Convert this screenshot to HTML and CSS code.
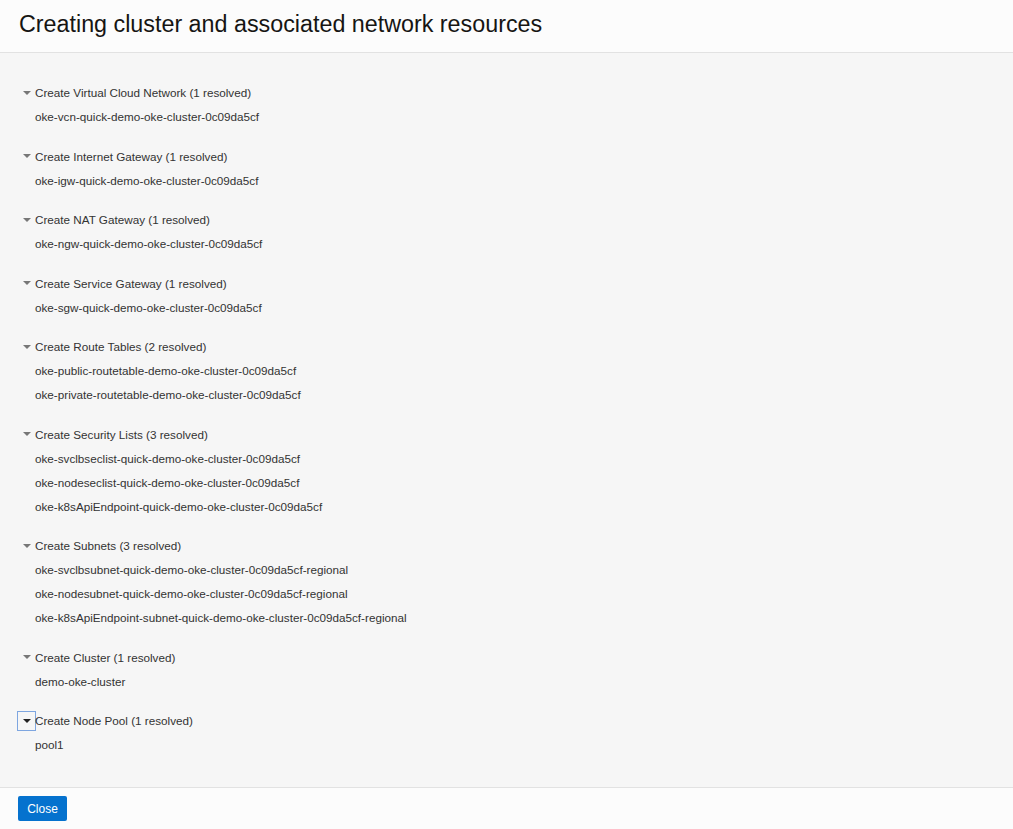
FILE: index.html
```html
<!DOCTYPE html>
<html>
<head>
<meta charset="utf-8">
<link rel="stylesheet" href="styles.css">
</head>
<body>
<div class="dialog">
  <header class="dlg-header">
    <h1 class="dlg-title">Creating cluster and associated network resources</h1>
  </header>
  <main class="dlg-body">
    <section class="group">
      <div class="group-head"><span class="toggle"><span class="tri"></span></span><span class="label">Create Virtual Cloud Network (1 resolved)</span></div>
      <div class="item">oke-vcn-quick-demo-oke-cluster-0c09da5cf</div>
    </section>
    <section class="group">
      <div class="group-head"><span class="toggle"><span class="tri"></span></span><span class="label">Create Internet Gateway (1 resolved)</span></div>
      <div class="item">oke-igw-quick-demo-oke-cluster-0c09da5cf</div>
    </section>
    <section class="group">
      <div class="group-head"><span class="toggle"><span class="tri"></span></span><span class="label">Create NAT Gateway (1 resolved)</span></div>
      <div class="item">oke-ngw-quick-demo-oke-cluster-0c09da5cf</div>
    </section>
    <section class="group">
      <div class="group-head"><span class="toggle"><span class="tri"></span></span><span class="label">Create Service Gateway (1 resolved)</span></div>
      <div class="item">oke-sgw-quick-demo-oke-cluster-0c09da5cf</div>
    </section>
    <section class="group">
      <div class="group-head"><span class="toggle"><span class="tri"></span></span><span class="label">Create Route Tables (2 resolved)</span></div>
      <div class="item">oke-public-routetable-demo-oke-cluster-0c09da5cf</div>
      <div class="item">oke-private-routetable-demo-oke-cluster-0c09da5cf</div>
    </section>
    <section class="group">
      <div class="group-head"><span class="toggle"><span class="tri"></span></span><span class="label">Create Security Lists (3 resolved)</span></div>
      <div class="item">oke-svclbseclist-quick-demo-oke-cluster-0c09da5cf</div>
      <div class="item">oke-nodeseclist-quick-demo-oke-cluster-0c09da5cf</div>
      <div class="item">oke-k8sApiEndpoint-quick-demo-oke-cluster-0c09da5cf</div>
    </section>
    <section class="group">
      <div class="group-head"><span class="toggle"><span class="tri"></span></span><span class="label">Create Subnets (3 resolved)</span></div>
      <div class="item">oke-svclbsubnet-quick-demo-oke-cluster-0c09da5cf-regional</div>
      <div class="item">oke-nodesubnet-quick-demo-oke-cluster-0c09da5cf-regional</div>
      <div class="item">oke-k8sApiEndpoint-subnet-quick-demo-oke-cluster-0c09da5cf-regional</div>
    </section>
    <section class="group">
      <div class="group-head"><span class="toggle"><span class="tri"></span></span><span class="label">Create Cluster (1 resolved)</span></div>
      <div class="item">demo-oke-cluster</div>
    </section>
    <section class="group">
      <div class="group-head"><span class="toggle focused"><span class="tri dark"></span></span><span class="label">Create Node Pool (1 resolved)</span></div>
      <div class="item">pool1</div>
    </section>
  </main>
  <footer class="dlg-footer">
    <button class="btn-primary">Close</button>
  </footer>
</div>
</body>
</html>
```
FILE: styles.css
```css
html, body {
  margin: 0;
  padding: 0;
}
body {
  font-family: "Liberation Sans", Arial, sans-serif;
  background: #f6f6f6;
  color: #252525;
}
.dialog {
  display: flex;
  flex-direction: column;
  height: 829px;
  overflow: hidden;
}
.dlg-header {
  background: #fcfcfc;
  border-bottom: 1px solid #e2e2e2;
  height: 52px;
  flex: none;
  display: flex;
  align-items: center;
  padding: 0 19px;
}
.dlg-title {
  margin: 0;
  font-size: 23.3px;
  font-weight: normal;
  color: #161513;
  line-height: 1;
  position: relative;
  top: -1px;
}
.dlg-body {
  flex: 1;
  padding: 27px 0 0 0;
  overflow: hidden;
}
.group {
  margin-bottom: 14.5px;
}
.group-head {
  display: flex;
  align-items: center;
  height: 25px;
  font-size: 11.7px;
  color: #333;
}
.toggle {
  display: flex;
  align-items: center;
  justify-content: center;
  width: 18px;
  height: 19px;
  margin-left: 18px;
  box-sizing: border-box;
}
.toggle.focused {
  border: 1px solid #7ea6e0;
  margin-left: 17px;
  width: 19px;
  height: 20px;
}
.tri {
  width: 0;
  height: 0;
  border-left: 4px solid transparent;
  border-right: 4px solid transparent;
  border-top: 4px solid #777;
}
.tri.dark {
  border-top-color: #222;
}
.label {
  margin-left: -1px;
}
.item {
  height: 24px;
  line-height: 24px;
  font-size: 11.7px;
  color: #333;
  padding-left: 35px;
}
.dlg-footer {
  background: #fcfcfc;
  border-top: 1px solid #e2e2e2;
  height: 41px;
  flex: none;
  display: flex;
  align-items: center;
  padding: 0 18px;
}
.btn-primary {
  font-family: "Liberation Sans", Arial, sans-serif;
  font-size: 12px;
  color: #fff;
  background: #0572ce;
  border: none;
  border-radius: 2px;
  width: 49px;
  height: 25px;
  padding: 0;
}
```
